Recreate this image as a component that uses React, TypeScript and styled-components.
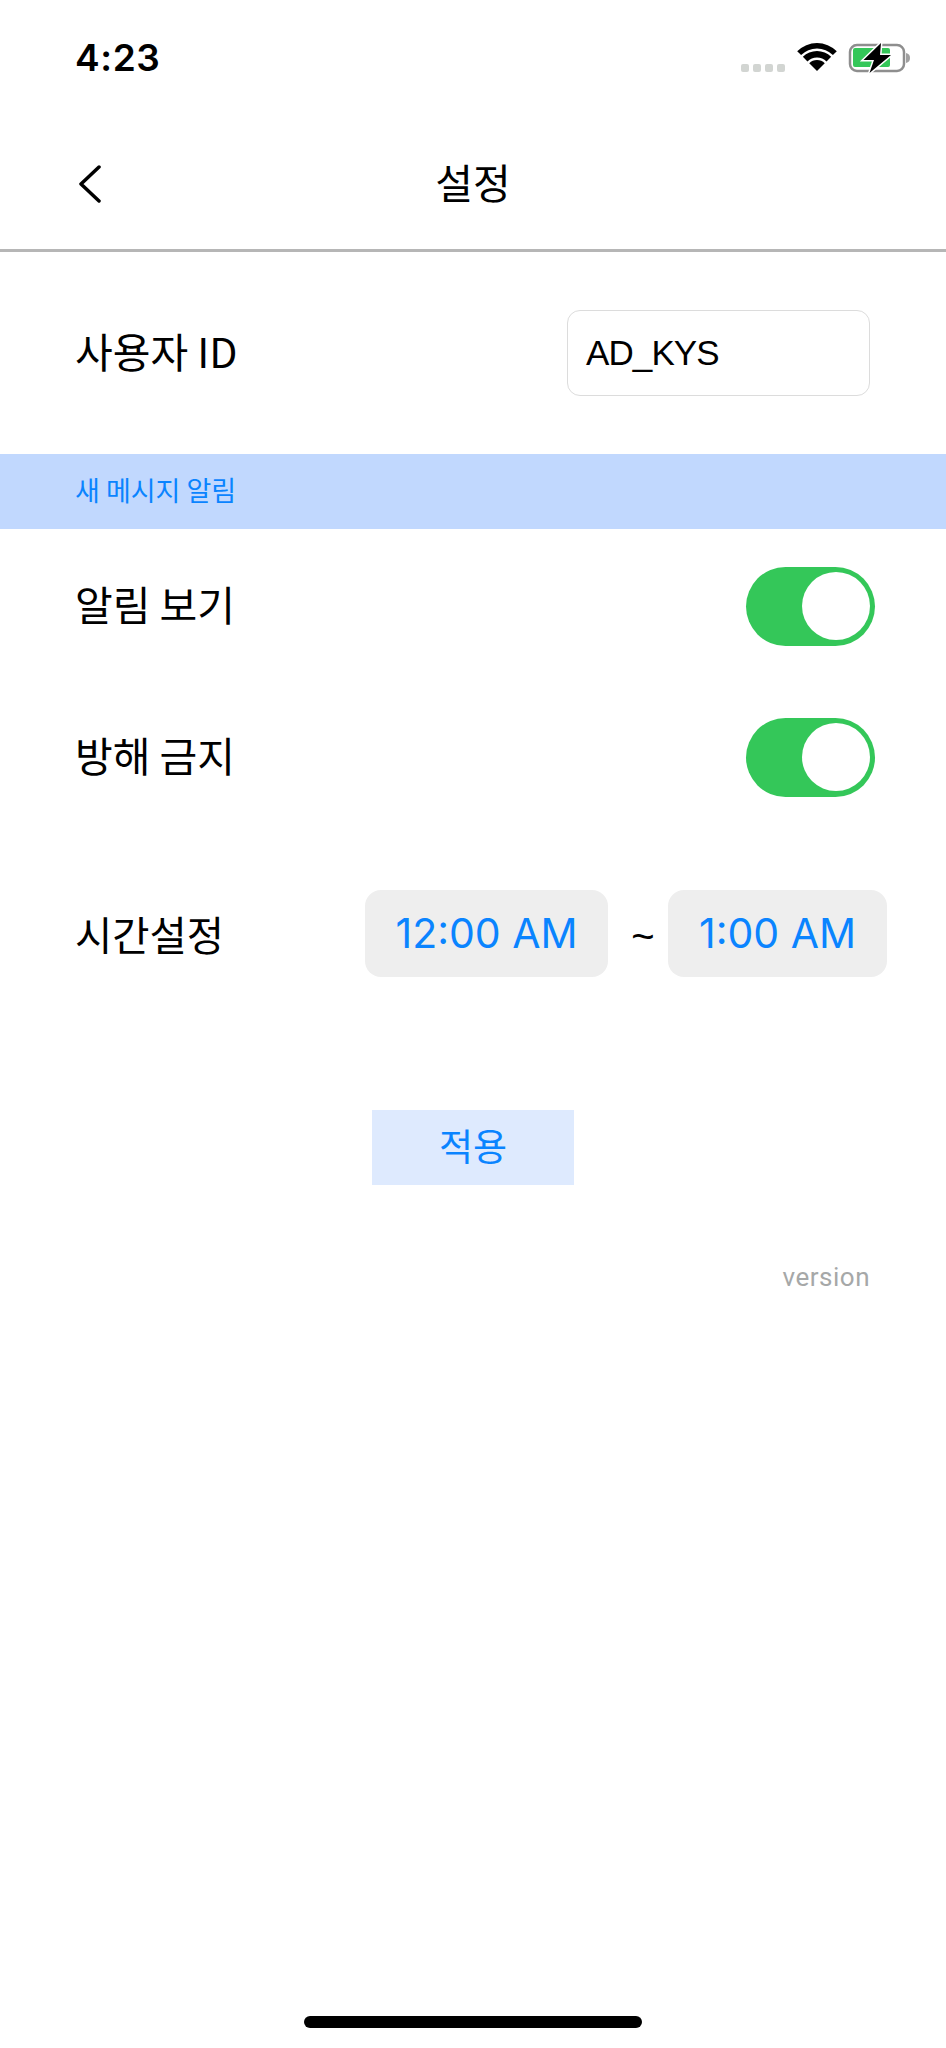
import React from 'react';
import styled, { createGlobalStyle } from 'styled-components';

const Global = createGlobalStyle`
  html, body { margin: 0; padding: 0; background: #fff; }
  body { font-family: "Inter", "Noto Sans CJK KR", sans-serif; }
`;

const KR = `"Noto Sans CJK KR", "Liberation Sans", sans-serif`;
const LATIN = `"Inter", "Noto Sans CJK KR", sans-serif`;

const Screen = styled.div`
  width: 946px;
  height: 2048px;
  display: flex;
  flex-direction: column;
  background: #fff;
  overflow: hidden;
`;

const StatusBar = styled.div`
  height: 108px;
  display: flex;
  justify-content: space-between;
  padding: 36px 36px 0 75px;
  box-sizing: border-box;
`;

const Clock = styled.div`
  font: 600 37px/44px ${LATIN};
  letter-spacing: 0.6px;
  color: #000;
`;

const StatusIcons = styled.div`
  display: flex;
  align-items: flex-start;
  padding-top: 6px;
`;

const Dots = styled.div`
  display: flex;
  gap: 4px;
  margin: 22px 12px 0 0;
`;

const Dot = styled.span`
  width: 8px;
  height: 8px;
  border-radius: 2px;
  background: #d2d5d2;
`;

const WifiIcon = styled.svg`
  margin-right: 11px;
`;

const Header = styled.header`
  height: 144px;
  box-sizing: border-box;
  border-bottom: 3px solid #b6b6b6;
  display: flex;
  align-items: center;
  justify-content: center;
  position: relative;
  padding-top: 4px;
`;

const BackIcon = styled.svg`
  position: absolute;
  left: 78px;
  top: 57px;
`;

const Title = styled.h1`
  margin: 0;
  font: 400 41px/48px ${KR};
  color: #000;
`;

const IdRow = styled.div`
  height: 202px;
  box-sizing: border-box;
  padding: 58px 76px 0 75px;
  display: flex;
  justify-content: space-between;
  align-items: flex-start;
`;

const Label = styled.span`
  font: 400 41px/81px ${KR};
  color: #000;
`;

const IdBox = styled.div`
  width: 303px;
  height: 86px;
  box-sizing: border-box;
  border: 1.5px solid #dcdcdc;
  border-radius: 13px;
  padding-left: 18px;
  font: 400 35px/84px "Liberation Sans", sans-serif;
  letter-spacing: -0.9px;
  color: #000;
`;

const Band = styled.div`
  height: 75px;
  background: #c1d8fe;
  padding-left: 75px;
  font: 400 27px/71px ${KR};
  color: #0a84ff;
`;

const ToggleRow = styled.div`
  height: 151px;
  box-sizing: border-box;
  padding: 37.5px 71px 0 75px;
  display: flex;
  justify-content: space-between;
  align-items: flex-start;
`;

const ToggleLabel = styled.span`
  font: 400 41px/72px ${KR};
  color: #000;
`;

const Toggle = styled.div`
  width: 129px;
  height: 79px;
  border-radius: 40px;
  background: #34c759;
  display: flex;
  align-items: center;
  justify-content: flex-end;
  padding-right: 5px;
  box-sizing: border-box;
`;

const Knob = styled.span`
  width: 68px;
  height: 68px;
  border-radius: 50%;
  background: #fff;
`;

const TimeRow = styled.div`
  margin-top: 59px;
  height: 87px;
  padding: 0 59px 0 75px;
  display: flex;
  align-items: center;
`;

const TimeLabel = styled.span`
  flex: 1;
  font: 400 40.5px/82px ${KR};
  color: #000;
`;

const TimePill = styled.div<{ $w: number }>`
  width: ${p => p.$w}px;
  height: 87px;
  border-radius: 16px;
  background: #eeeeee;
  text-align: center;
  font: 400 41px/87px "Inter", sans-serif;
  color: #0a84ff;
`;

const Tilde = styled.span`
  width: 60px;
  box-sizing: border-box;
  padding: 6px 0 0 10px;
  text-align: center;
  font: 400 40px/87px "Liberation Sans", sans-serif;
  color: #000;
`;

const Apply = styled.button`
  align-self: center;
  margin-top: 133px;
  width: 202px;
  height: 75px;
  border: 0;
  padding: 0 0 6px;
  background: #deeafe;
  font: 400 37px/48px ${KR};
  color: #0a84ff;
`;

const Version = styled.div`
  margin-top: 76px;
  padding-right: 76px;
  text-align: right;
  font: 400 26px/32px "Roboto", sans-serif;
  letter-spacing: 0.5px;
  color: #a6a8a8;
`;

const Spacer = styled.div`
  flex: 1;
`;

const HomeBar = styled.div`
  align-self: center;
  width: 338px;
  height: 12px;
  margin-bottom: 20px;
  border-radius: 6px;
  background: #000;
`;

export default function App() {
  return (
    <Screen>
      <Global />
      <StatusBar>
        <Clock>4:23</Clock>
        <StatusIcons>
          <Dots>
            <Dot /><Dot /><Dot /><Dot />
          </Dots>
          <WifiIcon width="40" height="30" viewBox="0 0 40 30">
            <path d="M20 29 12.22 21.22A11 11 0 0 1 27.78 21.22Z" fill="#000" />
            <path d="M10.45 19.45A13.500 13.500 0 0 1 29.55 19.45L34.14 14.86A20 20 0 0 0 5.86 14.86Z" fill="#000" />
            <path d="M4.09 13.09A22.500 22.500 0 0 1 35.91 13.09L39.8 9.2A28 28 0 0 0 .2 9.2Z" fill="#000" />
          </WifiIcon>
          <svg width="62" height="32" viewBox="0 0 62 32">
            <rect x="2" y="3" width="54" height="26" rx="7" fill="none" stroke="#8e8e8e" strokeWidth="2.500" />
            <rect x="5" y="6" width="37" height="19" rx="2" fill="#34c759" />
            <path d="M58 11c3 .5 4 2.500 4 5s-1 4.500-4 5Z" fill="#a0a0a0" />
            <path d="M33 1 15.500 18H26L21.500 31 43 13H32Z" fill="#000" stroke="#fff" strokeWidth="3" paintOrder="stroke" />
          </svg>
        </StatusIcons>
      </StatusBar>
      <Header>
        <BackIcon width="24" height="38" viewBox="0 0 24 38">
          <path d="M21 2 3 19l18 17" fill="none" stroke="#000" strokeWidth="3.500" strokeLinecap="round" strokeLinejoin="round" />
        </BackIcon>
        <Title>설정</Title>
      </Header>
      <IdRow>
        <Label>사용자 ID</Label>
        <IdBox>AD_KYS</IdBox>
      </IdRow>
      <Band>새 메시지 알림</Band>
      <ToggleRow>
        <ToggleLabel>알림 보기</ToggleLabel>
        <Toggle><Knob /></Toggle>
      </ToggleRow>
      <ToggleRow>
        <ToggleLabel>방해 금지</ToggleLabel>
        <Toggle><Knob /></Toggle>
      </ToggleRow>
      <TimeRow>
        <TimeLabel>시간설정</TimeLabel>
        <TimePill $w={243}>12:00 AM</TimePill>
        <Tilde>~</Tilde>
        <TimePill $w={219}>1:00 AM</TimePill>
      </TimeRow>
      <Apply>적용</Apply>
      <Version>version</Version>
      <Spacer />
      <HomeBar />
    </Screen>
  );
}
